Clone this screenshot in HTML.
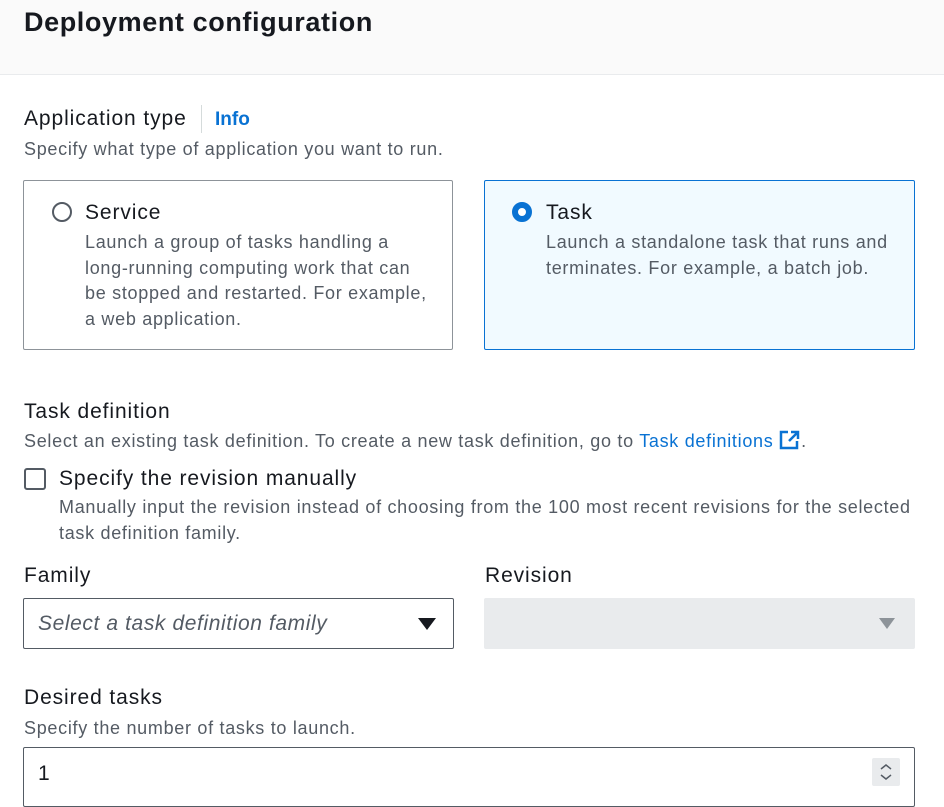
<!DOCTYPE html>
<html><head><meta charset="utf-8"><style>
*{box-sizing:border-box;margin:0;padding:0}
body{width:944px;height:794px;overflow:hidden;background:#fff;font-family:"Liberation Sans",sans-serif;color:#16191f;position:relative}
.a{position:absolute;white-space:nowrap}
.hdr{position:absolute;left:0;top:0;width:944px;height:75px;background:#fafafa;border-bottom:1px solid #e9ebed}
.h1{left:24px;top:7px;font-size:27px;font-weight:bold;letter-spacing:0.6px}
.lbl{font-size:21px;letter-spacing:0.9px}
.d{font-size:18px;color:#545b64;letter-spacing:0.7px}
.card{position:absolute;top:180px;width:430px;height:170px;border:1px solid #8d9399;border-radius:2px}
.radio{position:absolute;width:20px;height:20px;border-radius:50%}
.ct{position:absolute;left:61px;top:20px;font-size:21px;letter-spacing:0.9px}
.cd{position:absolute;left:61px;top:49px;font-size:18px;color:#545b64;line-height:25.5px;letter-spacing:0.7px;white-space:nowrap}
</style></head><body>
<div class="hdr"></div>
<div class="a h1">Deployment configuration</div>
<div class="a lbl" style="left:24px;top:107px">Application type</div>
<div class="a" style="left:201px;top:105px;width:1px;height:28px;background:#d5dbdb"></div>
<div class="a" style="left:215px;top:109px;font-size:19px;font-weight:bold;color:#0972d3">Info</div>
<div class="a d" style="left:24px;top:139px">Specify what type of application you want to run.</div>

<div class="card" style="left:23px">
<div class="radio" style="left:28px;top:21px;border:2px solid #545b64"></div>
<div class="ct">Service</div>
<div class="cd">Launch a group of tasks handling a<br>long-running computing work that can<br>be stopped and restarted. For example,<br>a web application.</div>
</div>
<div class="card" style="left:484px;width:431px;background:#f1faff;border-color:#0972d3">
<div class="radio" style="left:27px;top:21px;border:6px solid #0972d3;background:#fff"></div>
<div class="ct">Task</div>
<div class="cd">Launch a standalone task that runs and<br>terminates. For example, a batch job.</div>
</div>

<div class="a lbl" style="left:24px;top:400px">Task definition</div>
<div class="a d" style="left:24px;top:430px">Select an existing task definition. To create a new task definition, go to <span style="color:#0972d3">Task definitions</span> <svg width="22" height="20" viewBox="0 0 22 20" style="vertical-align:-3px"><path d="M9 2H2v16h16v-7" fill="none" stroke="#0972d3" stroke-width="2.5"/><path d="M12 2h7v7M19 2l-9 9" fill="none" stroke="#0972d3" stroke-width="2.5"/></svg>.</div>
<div class="a" style="left:24px;top:468px;width:22px;height:22px;border:2px solid #545b64;border-radius:3px"></div>
<div class="a lbl" style="left:59px;top:467px">Specify the revision manually</div>
<div class="a d" style="left:59px;top:495px;line-height:25.5px">Manually input the revision instead of choosing from the 100 most recent revisions for the selected<br>task definition family.</div>

<div class="a lbl" style="left:24px;top:564px">Family</div>
<div class="a lbl" style="left:485px;top:564px">Revision</div>
<div class="a" style="left:23px;top:598px;width:431px;height:51px;border:1px solid #545b64;border-radius:2px"></div>
<div class="a" style="left:38px;top:612px;font-size:21px;font-style:italic;color:#545b64;letter-spacing:0.6px">Select a task definition family</div>
<svg class="a" style="left:417px;top:617px" width="20" height="14"><path d="M1 1h18L10 13z" fill="#16191f"/></svg>
<div class="a" style="left:484px;top:598px;width:431px;height:51px;background:#e9ebed;border-radius:2px"></div>
<svg class="a" style="left:877px;top:617px" width="20" height="14"><path d="M2 1h16L10 12z" fill="#8d9399"/></svg>

<div class="a lbl" style="left:24px;top:686px">Desired tasks</div>
<div class="a d" style="left:24px;top:718px">Specify the number of tasks to launch.</div>
<div class="a" style="left:23px;top:747px;width:892px;height:60px;border:1px solid #545b64;border-radius:2px"></div>
<div class="a" style="left:38px;top:762px;font-size:21px">1</div>
<div class="a" style="left:872px;top:758px;width:28px;height:28px;background:#e9ebed;border-radius:2px"></div>
<svg class="a" style="left:877px;top:762px" width="18" height="20"><path d="M4 7l5-4 5 4M4 13l5 4 5-4" fill="none" stroke="#545b64" stroke-width="1.5"/></svg>
</body></html>
